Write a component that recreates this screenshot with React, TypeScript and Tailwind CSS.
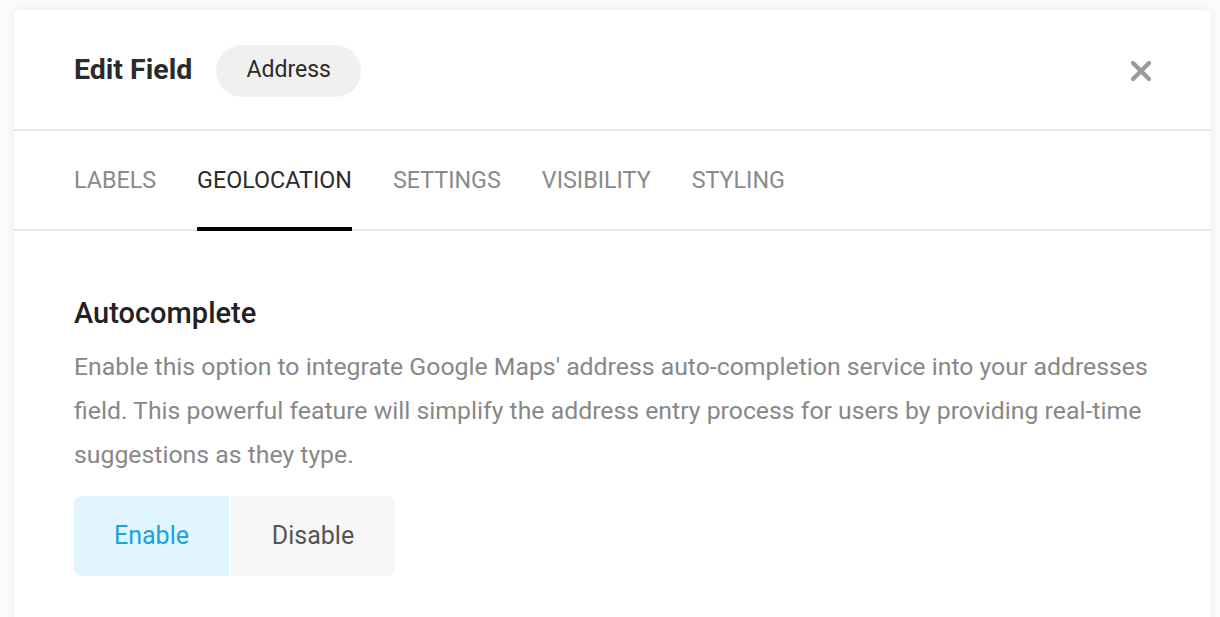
import { X } from "lucide-react";

const tabs = ["Labels", "Geolocation", "Settings", "Visibility", "Styling"];

export default function App() {
  return (
    <div className="min-h-screen bg-[#fbfbfb] pt-[10px] pl-[14px] pr-[9px] font-['Roboto',sans-serif]">
      <div className="h-[620px] rounded-[4px] bg-white shadow-[0_0_8px_rgba(0,0,0,0.07)]">
        <div className="flex h-[121px] items-center border-b-2 border-[#e6e6e6] pl-[60px] pr-[54px] pt-[2px]">
          <h1 className="text-[28.5px] font-bold text-[#2a2a2a]">Edit Field</h1>
          <span className="ml-[24px] flex h-[52px] w-[145px] items-center justify-center rounded-full bg-[#f0f0f0] text-[23px] text-[#2a2a2a]">
            Address
          </span>
          <button className="ml-auto text-[#9a9a9a]">
            <X size={32} strokeWidth={3.2} />
          </button>
        </div>

        <div className="flex h-[100px] items-stretch gap-[41px] border-b-2 border-[#e6e6e6] pl-[60px]">
          {tabs.map((tab) => {
            const active = tab === "Geolocation";
            return (
              <div
                key={tab}
                className={
                  active
                    ? "-mb-[2px] flex items-center border-b-[4px] border-black pt-[2px] text-[23.3px] uppercase text-[#2a2a2a]"
                    : "-mb-[2px] flex items-center border-b-[4px] border-transparent pt-[2px] text-[23.3px] uppercase text-[#8a8a8a]"
                }
              >
                {tab}
              </div>
            );
          })}
        </div>

        <div className="pl-[60px] pr-[50px] pt-[64px]">
          <h2 className="text-[29px] leading-[36px] font-medium text-[#222]">Autocomplete</h2>
          <p className="mt-[14px] text-[24.8px] leading-[44px] text-[#888]">
            Enable this option to integrate Google Maps' address auto-completion service into your addresses field. This
            powerful feature will simplify the address entry process for users by providing real-time suggestions as they
            type.
          </p>
          <div className="mt-[19px] flex gap-[2px]">
            <button className="h-[80px] w-[155px] rounded-l-[8px] bg-[#e1f5fe] text-[25px] text-[#1ba3e0]">Enable</button>
            <button className="h-[80px] w-[164px] rounded-r-[8px] bg-[#f7f7f7] text-[25px] text-[#555]">Disable</button>
          </div>
        </div>
      </div>
    </div>
  );
}
